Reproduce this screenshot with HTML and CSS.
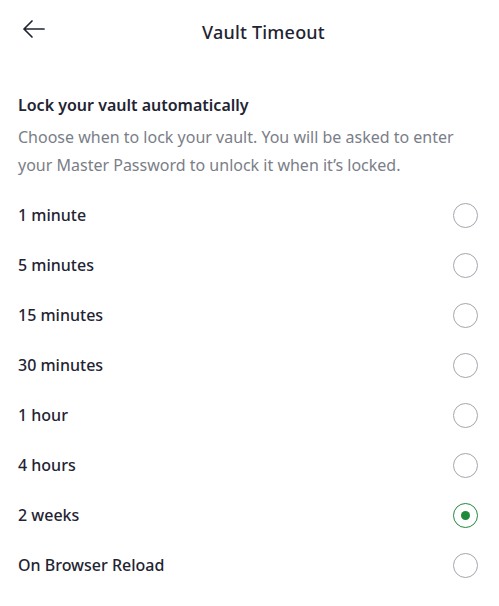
FILE: index.html
```html
<!DOCTYPE html>
<html>

<head>
    <meta charset="UTF-8">
    <title>Vault Timeout</title>
    <link rel="stylesheet" href="styles.css">
</head>

<body>
    <div id="header">
        <button id="back-button" aria-label="Back">
            <svg width="24" height="20" viewBox="0 0 24 20">
                <path d="M22 10H2M10 2L2 10L10 18" fill="none" stroke="#1f2433" stroke-width="1.7"
                    stroke-linecap="round" stroke-linejoin="round" />
            </svg>
        </button>
        <h1>Vault Timeout</h1>
    </div>
    <div id="content">
        <h2>Lock your vault automatically</h2>
        <p class="hint">Choose when to lock your vault. You will be asked to enter your Master Password to unlock it when it’s locked.</p>
        <div id="options">
            <label class="option"><span>1 minute</span><input type="radio" name="timeout" value="1"></label>
            <label class="option"><span>5 minutes</span><input type="radio" name="timeout" value="5"></label>
            <label class="option"><span>15 minutes</span><input type="radio" name="timeout" value="15"></label>
            <label class="option"><span>30 minutes</span><input type="radio" name="timeout" value="30"></label>
            <label class="option"><span>1 hour</span><input type="radio" name="timeout" value="60"></label>
            <label class="option"><span>4 hours</span><input type="radio" name="timeout" value="240"></label>
            <label class="option"><span>2 weeks</span><input type="radio" name="timeout" value="20160" checked></label>
            <label class="option"><span>On Browser Reload</span><input type="radio" name="timeout" value="-1"></label>
        </div>
    </div>
</body>

</html>
```

FILE: styles.css
```css
body {
    margin: 0;
    font-family: "Noto Sans", "Open Sans", sans-serif;
    color: #1f2433;
    background: #fff;
}

#header {
    display: flex;
    align-items: center;
    height: 64px;
    padding: 0 18px;
}

#back-button {
    width: 28px;
    height: 28px;
    padding: 0 0 0 4px;
    margin-top: -6px;
    border: none;
    background: none;
    display: flex;
    align-items: center;
    justify-content: flex-start;
}

#header h1 {
    flex: 1;
    margin: 0;
    text-align: center;
    font-size: 18px;
    font-weight: 500;
    letter-spacing: 0.2px;
}

#content {
    padding: 27px 18px 0;
}

h2 {
    margin: 0;
    font-size: 16px;
    font-weight: 600;
    line-height: 28px;
}

.hint {
    margin: 4px 0 11px;
    font-size: 16px;
    line-height: 28px;
    color: #7a7e88;
}

.option {
    display: flex;
    align-items: center;
    justify-content: space-between;
    height: 50px;
    font-size: 16px;
    font-weight: 500;
}

.option input {
    appearance: none;
    width: 25px;
    height: 25px;
    margin: 0 3px 0 0;
    border: 1px solid #a3a6ad;
    border-radius: 50%;
    display: flex;
    align-items: center;
    justify-content: center;
}

.option input:checked {
    border: 1.5px solid #1f8a3b;
}

.option input:checked::after {
    content: "";
    width: 9px;
    height: 9px;
    border-radius: 50%;
    background: #1f8a3b;
}
```
